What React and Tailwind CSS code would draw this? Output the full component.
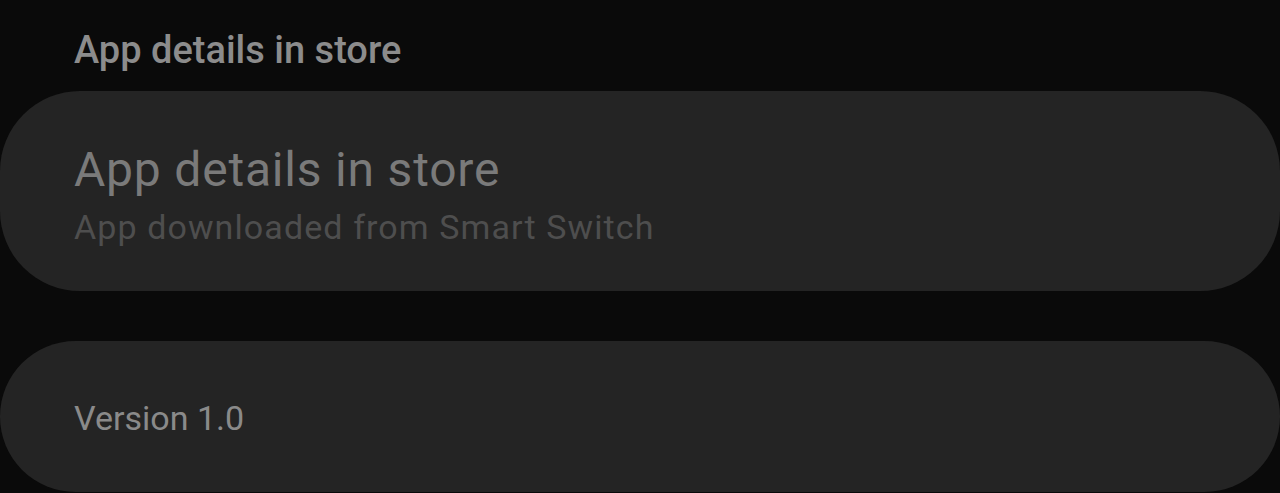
import React from "react";

const font = { fontFamily: "Roboto, 'Noto Sans', sans-serif" };

const App = () => {
  return (
    <div
      className="w-[1280px] h-[493px] overflow-hidden bg-[#0a0a0a] flex flex-col"
      style={font}
    >
      <div className="h-[91px] pl-[74px] pt-[26px]">
        <h2 className="text-[38px] leading-[48px] font-medium text-[#8c8c8c]">
          App details in store
        </h2>
      </div>

      <div className="h-[200px] rounded-[80px] bg-[#242424] flex flex-col pl-[74px] pt-[53px]">
        <p className="text-[48px] leading-[52px] text-[#7a7a7a] tracking-[0.8px]">
          App details in store
        </p>
        <p className="mt-[9px] text-[34px] leading-[44px] text-[#4e4e4e] tracking-[1.1px]">
          App downloaded from Smart Switch
        </p>
      </div>

      <div className="mt-[50px] h-[151px] rounded-[80px] bg-[#242424] flex items-center pl-[74px] pt-[2px]">
        <p className="text-[34px] leading-[40px] text-[#8a8a8a]">Version 1.0</p>
      </div>
    </div>
  );
};

export default App;
